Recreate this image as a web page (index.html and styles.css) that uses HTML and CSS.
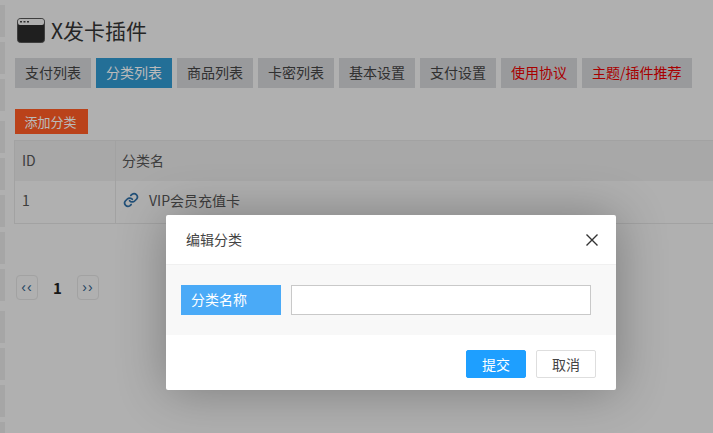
FILE: index.html
```html
<!DOCTYPE html>
<html lang="zh-CN">
<head>
<meta charset="utf-8">
<title>X发卡插件</title>
<link rel="stylesheet" href="styles.css">
</head>
<body>
<div class="page">
  <aside class="strip">
    <div class="strip-group"><i></i><i></i><i></i></div>
    <div class="strip-group"><i></i><i></i><i></i><i></i><i></i></div>
    <div class="strip-group"><i></i><i></i><i></i><i></i></div>
  </aside>
  <main class="main">
    <h1 class="title">
      <svg class="title-icon" viewBox="0 0 28 25" width="28" height="25" aria-hidden="true">
        <rect x="0.5" y="0.5" width="27" height="24" rx="3" fill="#2b2b2b" stroke="#555"/>
        <rect x="1" y="1" width="26" height="6" rx="2" fill="#f0f0f0"/>
        <rect x="3" y="3" width="2" height="1.5" fill="#444"/>
        <rect x="6.5" y="3" width="2" height="1.5" fill="#444"/>
        <rect x="10" y="3" width="2" height="1.5" fill="#444"/>
      </svg>
      <span>X发卡插件</span>
    </h1>
    <nav class="tabs">
      <a class="tab">支付列表</a>
      <a class="tab tab-active">分类列表</a>
      <a class="tab">商品列表</a>
      <a class="tab">卡密列表</a>
      <a class="tab">基本设置</a>
      <a class="tab">支付设置</a>
      <a class="tab tab-red">使用协议</a>
      <a class="tab tab-red">主题/插件推荐</a>
    </nav>
    <button class="add-btn">添加分类</button>
    <table class="grid">
      <thead>
        <tr><th class="col-id">ID</th><th>分类名</th></tr>
      </thead>
      <tbody>
        <tr>
          <td>1</td>
          <td>
            <span class="cat">
              <svg class="link-icon" viewBox="0 0 24 24" width="16" height="16" fill="none" stroke="#2f6ea5" stroke-width="2.6" stroke-linecap="round" stroke-linejoin="round" aria-hidden="true">
                <path d="M10 13a5 5 0 0 0 7.5.5l3-3a5 5 0 0 0-7-7l-1.7 1.7"/>
                <path d="M14 11a5 5 0 0 0-7.5-.5l-3 3a5 5 0 0 0 7 7l1.7-1.7"/>
              </svg>
              <span>VIP会员充值卡</span>
            </span>
          </td>
        </tr>
      </tbody>
    </table>
    <div class="pager">
      <a class="pager-btn">‹‹</a>
      <b class="pager-num">1</b>
      <a class="pager-btn">››</a>
    </div>
  </main>
</div>
<div class="shade"></div>
<section class="modal">
  <header class="modal-head">
    <span>编辑分类</span>
    <svg class="close" viewBox="0 0 12 12" width="12" height="12" aria-hidden="true">
      <path d="M0.5 0.5 11.5 11.5M11.5 0.5 0.5 11.5" stroke="#333" stroke-width="1.4" fill="none"/>
    </svg>
  </header>
  <div class="modal-body">
    <label class="field-label">分类名称</label>
    <input class="field-input" type="text">
  </div>
  <footer class="modal-foot">
    <button class="btn btn-primary">提交</button>
    <button class="btn">取消</button>
  </footer>
</section>
</body>
</html>
```
FILE: styles.css
```css
* { box-sizing: border-box; }
html, body { margin: 0; height: 100%; overflow: hidden; }
body {
  background: #f1f1f1;
  font-family: "Noto Sans CJK SC", "Liberation Sans", sans-serif;
  font-size: 14px;
  color: #444;
}
.page { display: flex; height: 433px; width: 713px; overflow: hidden; }
.strip { width: 5px; flex: none; padding-top: 5px; display: flex; flex-direction: column; gap: 10px; }
.strip-group { display: flex; flex-direction: column; gap: 5px; }
.strip-group i { display: block; height: 32px; background: #e4e4e4; }
.main { flex: 1; min-width: 0; padding: 18px 0 0 10px; }
.title { display: flex; align-items: center; gap: 6px; margin: 0 0 2px 2px; height: 28px; font-size: 21px; font-weight: 400; line-height: 28px; color: #333; }
.title span { margin-top: -4px; }
.title-icon { flex: none; margin-top: -3px; }
.tabs { display: flex; gap: 5px; margin-top: 12px; }
.tab { display: block; height: 30px; line-height: 29px; padding: 0 10px; background: #d2d3d6; color: #444; white-space: nowrap; }
.tab-active { background: #3198cf; color: #fff; }
.tab-red { color: #e60000; }
.add-btn { display: block; margin: 21px 0 0; width: 73px; height: 25px; padding: 0 2px 0 0; border: 0; background: #ff5b24; color: #fff; font: inherit; font-size: 13px; line-height: 25px; }
.grid { width: 712px; margin: 6px 0 0 -1px; border-collapse: collapse; border: 1px solid #dedede; }
.grid th, .grid td { border: 1px solid #dedede; padding: 0 7px; text-align: left; font-weight: 400; color: #555; }
.grid th + th, .grid td + td { padding-left: 6px; }
.grid th { height: 40px; padding-bottom: 1px; background: #e6e6e6; border-bottom: 0; }
.grid td { height: 43px; padding-bottom: 3px; }
.grid tr td { border-top: 0; }
.col-id { width: 101px; }
.grid th, .grid td { border-right: 0; }
.cat { display: flex; align-items: center; gap: 10px; padding-left: 1px; }
.link-icon { flex: none; }
.pager { display: flex; align-items: center; margin: 51px 0 0 1px; }
.pager-btn { display: block; width: 22px; height: 25px; border: 1px solid #dedede; border-radius: 4px; text-align: center; line-height: 23px; font-family: "Liberation Sans", sans-serif; font-size: 14px; letter-spacing: 1px; color: #2f5d87; }
.pager-num { width: 39px; text-align: center; font-size: 15px; font-weight: 700; color: #222; }
.shade { position: absolute; inset: 0; background: rgba(0, 0, 0, 0.27); }
.modal { position: absolute; left: 166px; top: 215px; width: 450px; height: 175px; background: #fff; box-shadow: 1px 1px 50px rgba(0, 0, 0, 0.3); border-radius: 2px; display: flex; flex-direction: column; }
.modal-head { height: 50px; flex: none; display: flex; align-items: center; justify-content: space-between; padding: 0 18px 2px 20px; border-bottom: 1px solid #f0f0f0; color: #444; }
.close { margin-top: 2px; }
.modal-body { height: 70px; flex: none; background: #f8f8f8; display: flex; align-items: center; gap: 10px; padding: 0 15px; }
.field-label { width: 100px; height: 30px; line-height: 29px; padding-left: 10px; background: #4aaaf7; color: #fff; }
.field-input { width: 300px; height: 30px; padding: 0 8px; border: 1px solid #c9c9c9; background: #fff; outline: 0; }
.modal-foot { flex: 1; display: flex; justify-content: flex-end; align-items: center; gap: 10px; padding: 2px 20px 0; }
.btn { width: 60px; height: 28px; padding: 0; border: 1px solid #dedede; border-radius: 2px; background: #fff; color: #444; font: inherit; line-height: 26px; }
.btn-primary { background: #1e9fff; border-color: #1e9fff; color: #fff; }
```
